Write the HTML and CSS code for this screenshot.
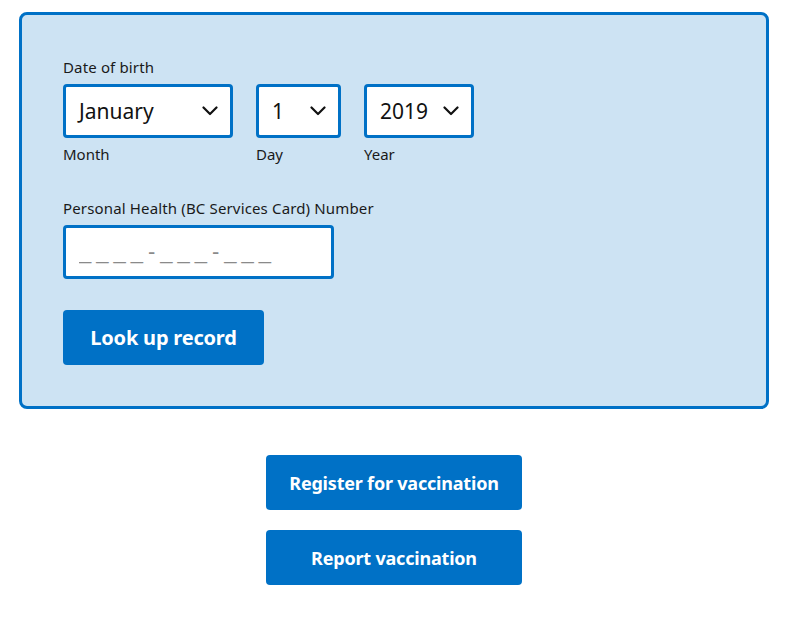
FILE: index.html
```html
<!DOCTYPE html>
<html lang="en">
<head>
<meta charset="utf-8">
<title>Vaccine record lookup</title>
<link rel="stylesheet" href="styles.css">
</head>
<body>
<main class="page">
  <form class="panel">
    <div class="field-label">Date of birth</div>
    <div class="dob">
      <div class="dob-item">
        <div class="select select-month"><span>January</span><svg class="chev" viewBox="0 0 16 10" width="16" height="10"><path d="M1.5 1.5 L8 8 L14.5 1.5" fill="none" stroke="#111" stroke-width="2.2" stroke-linecap="round" stroke-linejoin="round"/></svg></div>
        <div class="sub-label">Month</div>
      </div>
      <div class="dob-item">
        <div class="select select-day"><span>1</span><svg class="chev" viewBox="0 0 16 10" width="16" height="10"><path d="M1.5 1.5 L8 8 L14.5 1.5" fill="none" stroke="#111" stroke-width="2.2" stroke-linecap="round" stroke-linejoin="round"/></svg></div>
        <div class="sub-label">Day</div>
      </div>
      <div class="dob-item">
        <div class="select select-year"><span>2019</span><svg class="chev" viewBox="0 0 16 10" width="16" height="10"><path d="M1.5 1.5 L8 8 L14.5 1.5" fill="none" stroke="#111" stroke-width="2.2" stroke-linecap="round" stroke-linejoin="round"/></svg></div>
        <div class="sub-label">Year</div>
      </div>
    </div>
    <div class="field-label phn-label">Personal Health (BC Services Card) Number</div>
    <input class="phn" type="text" placeholder="____-___-___">
    <button class="btn btn-lookup" type="button">Look up record</button>
  </form>
  <div class="actions">
    <button class="btn btn-wide" type="button">Register for vaccination</button>
    <button class="btn btn-wide" type="button">Report vaccination</button>
  </div>
</main>
</body>
</html>
```

FILE: styles.css
```css
* { box-sizing: border-box; }
html, body { margin: 0; padding: 0; background: #fff; }
body {
  font-family: "Noto Sans", "Open Sans", sans-serif;
  color: #1a1a1a;
}
.page {
  width: 750px;
  margin-left: 19px;
  padding-top: 12px;
}
.panel {
  display: flex;
  flex-direction: column;
  align-items: flex-start;
  height: 397px;
  background: #cde3f3;
  border: 3px solid #0071c6;
  border-radius: 8px;
  padding: 42px 41px 0 41px;
}
.field-label {
  font-size: 15px;
  line-height: 20px;
  letter-spacing: 0.15px;
  margin-bottom: 7px;
}
.dob {
  display: flex;
  gap: 23px;
}
.select {
  display: flex;
  align-items: center;
  justify-content: space-between;
  height: 54px;
  background: #fff;
  border: 3px solid #0071c6;
  border-radius: 4px;
  padding: 0 12px 0 13px;
  font-size: 21px;
  color: #111;
}
.select-month { width: 170px; }
.select-day { width: 85px; }
.select-year { width: 110px; }
.chev { display: block; }
.sub-label {
  font-size: 15px;
  line-height: 20px;
  margin-top: 6px;
}
.phn-label { margin-top: 34px; }
.phn {
  width: 271px;
  height: 54px;
  border: 3px solid #0071c6;
  border-radius: 4px;
  background: #fff;
  padding: 0 13px;
  font-family: "Liberation Sans", sans-serif;
  font-size: 22px;
  letter-spacing: 5px;
  outline: none;
}
.phn::placeholder { color: #8a8a8a; }
.btn {
  display: flex;
  align-items: center;
  justify-content: center;
  height: 55px;
  border: none;
  border-radius: 4px;
  background: #0071c6;
  color: #fff;
  font-family: inherit;
  font-weight: 700;
  cursor: pointer;
}
.btn-lookup {
  margin-top: 31px;
  width: 201px;
  font-size: 20px;
  letter-spacing: -0.2px;
}
.actions {
  display: flex;
  flex-direction: column;
  align-items: center;
  gap: 20px;
  margin-top: 46px;
}
.btn-wide {
  width: 256px;
  font-size: 18px;
  letter-spacing: -0.2px;
}
```
